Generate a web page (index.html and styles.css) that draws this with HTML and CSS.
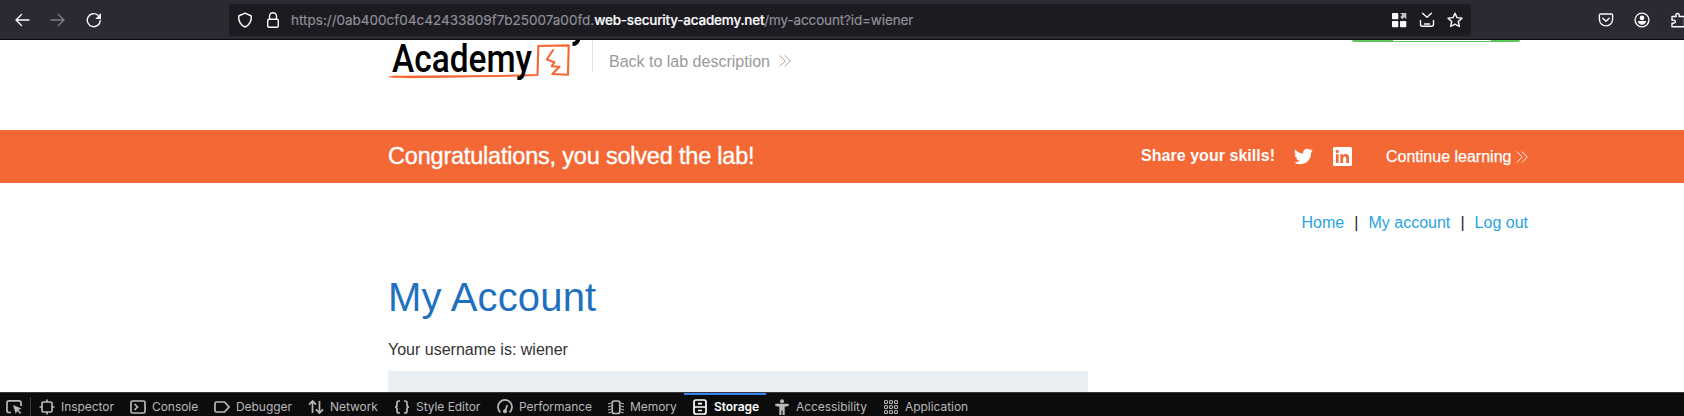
FILE: index.html
```html
<!DOCTYPE html>
<html lang="en">
<head>
<meta charset="utf-8">
<title>My Account</title>
<link rel="stylesheet" href="styles.css">
</head>
<body>
<header class="browser">
  <svg class="ic back" viewBox="0 0 16 16"><path d="M15 8H2M7.500 2.500 2 8l5.500 5.500"/></svg>
  <svg class="ic forward" viewBox="0 0 16 16"><path d="M1 8h13M8.500 2.500 14 8l-5.500 5.500"/></svg>
  <svg class="ic reload" viewBox="0 0 16 16"><path d="M14.300 8.500A6.500 6.500 0 1 1 12 3.200"/><path class="solid" d="M15 1v6H9.300z"/></svg>
  <div class="urlbar">
    <svg class="ic shield" viewBox="0 0 16 16"><path d="M8 1.200 14.300 4c.3 5-1.700 9-6.300 11C3.400 13 1.400 9 1.700 4z"/></svg>
    <svg class="ic lock" viewBox="0 0 16 16"><rect x="2.700" y="7.200" width="10.600" height="8" rx="1.500"/><path d="M4.500 7V4.200a3.500 3.500 0 0 1 7 0V7"/></svg>
    <div class="url"><span class="host-a">https://0ab400cf04c42433809f7b25007a00fd.</span><span class="host-b">web-security-academy.net</span><span class="path">/my-account?id=wiener</span></div>
    <svg class="ic grid" viewBox="0 0 16 16"><g class="solid"><rect x="1" y="1" width="6.300" height="6.300" rx=".8"/><rect x="1" y="9" width="6.300" height="6.300" rx=".8"/><rect x="9" y="9" width="6.300" height="6.300" rx=".8"/><path opacity=".75" d="M9 1h6.300v6.300l-2-2-2 2L9.300 5l2-2z"/></g></svg>
    <svg class="ic tray" viewBox="0 0 16 16"><path d="M3.500 1.300 8 5.300l4.500-4M1.500 8.500v3.800a2 2 0 0 0 2 2h9a2 2 0 0 0 2-2V8.500M5.500 12h5"/></svg>
    <svg class="ic star" viewBox="0 0 16 16"><path d="m8 1.200 2 4.400 5 .6-3.700 3.300 1 5L8 12.100l-4.300 2.400 1-5L1 6.200l5-.6z"/></svg>
  </div>
  <svg class="ic pocket" viewBox="0 0 16 16"><path d="M2.700 2h10.600c.8 0 1.300.5 1.300 1.300v4a6.600 6.600 0 0 1-13.200 0v-4C1.400 2.500 1.900 2 2.700 2zM4.800 6.200 8 9.200l3.200-3"/></svg>
  <svg class="ic person" viewBox="0 0 16 16"><circle cx="8" cy="8" r="6.900"/><circle class="solid" cx="8" cy="5.900" r="2.300"/><path class="solid" d="M3.900 9h8.200c0 2-1.700 3.700-4.100 3.700S3.900 11 3.900 9z"/></svg>
  <svg class="ic puzzle" viewBox="0 0 16 16"><path d="M2 14.700v-3.500c4.500.8 4.500-3.800 0-3V4.500h4.200C4.500.4 10.500.4 9 4.500h5.500v10.200z"/></svg>
</header>

<main class="page">
  <div class="lab-head">
    <div class="logo">
      <svg class="logo-art" viewBox="0 0 204 50"><path class="thin" d="M1 37.800 8 37.400 20 38.600 80 37.600"/><path class="thick" d="M5 37.800 110 37 149.500 36 150.300 7 180.700 6.400 180 35.800 164.300 35 171.500 27.800 163.800 27.200 166.500 23.200 158.800 20.500 165 11"/><path class="tail" d="M184.500 5q4.500 0 6-5"/></svg>
      <span class="logo-text">Academy</span>
    </div>
    <div class="back-link"><span class="back-text">Back to lab description</span><svg class="chev" viewBox="0 0 12 12"><path d="m.7.500 5.500 5.500-5.500 5.500M5.800.500l5.500 5.500-5.500 5.500"/></svg></div>
    <div class="status"><i></i></div>
  </div>
  <section class="banner">
    <span class="congrats">Congratulations, you solved the lab!</span>
    <span class="share">Share your skills!</span>
    <svg class="twitter" viewBox="0 0 24 24"><path d="M23.950 4.570a10 10 0 0 1-2.820.770 4.960 4.960 0 0 0 2.160-2.720c-.95.550-2 .950-3.130 1.180a4.920 4.920 0 0 0-8.380 4.480A13.900 13.900 0 0 1 1.640 3.160a4.820 4.820 0 0 0-.670 2.480c0 1.710.870 3.210 2.190 4.100a4.900 4.900 0 0 1-2.230-.620v.06a4.920 4.920 0 0 0 3.950 4.830 5 5 0 0 1-2.210.080 4.940 4.940 0 0 0 4.600 3.420A9.870 9.870 0 0 1 0 19.540a14 14 0 0 0 7.550 2.210c9.050 0 14-7.500 14-13.980v-.640a9.900 9.900 0 0 0 2.400-2.560z"/></svg>
    <svg class="linkedin" viewBox="0 0 18 18"><path fill-rule="evenodd" d="M1.500 0h15Q18 0 18 1.500v15q0 1.500-1.500 1.500h-15Q0 18 0 16.500v-15Q0 0 1.500 0zM2.800 6.900v8.300h2.500V6.900zM4.050 2.700a1.450 1.450 0 1 0 0 2.900 1.450 1.450 0 0 0 0-2.900zM7 6.900v8.300h2.600v-4.300c0-2.300 2.900-2.500 2.900 0v4.300h2.700V10c0-4-3.900-4.200-5.600-2.100v-1z"/></svg>
    <span class="continue">Continue learning</span>
    <svg class="chev" viewBox="0 0 12 12"><path d="m.7.500 5.500 5.500-5.500 5.500M5.800.500l5.500 5.500-5.500 5.500"/></svg>
  </section>
  <nav class="links"><a class="home">Home</a><b>|</b><a class="account">My account</a><b>|</b><a class="logout">Log out</a></nav>
  <h1>My Account</h1>
  <p class="user">Your username is: wiener</p>
  <div class="form-box"></div>
</main>

<footer class="tools">
  <div class="picker"><svg class="dt" viewBox="0 0 16 16"><path d="M5 13.500H3a2 2 0 0 1-2-2V3.800a2 2 0 0 1 2-2h10a2 2 0 0 1 2 2V7"/><path class="fill" d="m7 6 8.500 3.600-3.200 1.300 3 3-1.200 1.200-3-3-1.300 3z"/></svg></div>
  <div class="tab t1"><svg class="dt" viewBox="0 0 16 16"><rect x="3" y="3" width="10" height="10" rx="1.200"/><path d="M8 .5V3M8 13v2.500M.5 8H3M13 8h2.500"/></svg><span>Inspector</span></div>
  <div class="tab t2"><svg class="dt" viewBox="0 0 16 16"><rect x="1" y="2" width="14" height="12" rx="1.500"/><path d="m4.500 5 3 3-3 3"/></svg><span>Console</span></div>
  <div class="tab t3"><svg class="dt" viewBox="0 0 16 16"><path d="M2.500 3h8l4.500 5-4.500 5h-8Q1 13 1 11.500v-7Q1 3 2.500 3z"/></svg><span>Debugger</span></div>
  <div class="tab t4"><svg class="dt" viewBox="0 0 16 16"><path d="M4.500 14V2M1 5.700 4.500 2 8 5.700M11.500 2v12M8 10.300l3.500 3.700 3.500-3.700"/></svg><span>Network</span></div>
  <div class="tab t5"><svg class="dt" viewBox="0 0 16 16"><path d="M6 2H5Q3 2 3 4v2q0 2-2 2 2 0 2 2v2q0 2 2 2h1M10 2h1q2 0 2 2v2q0 2 2 2-2 0-2 2v2q0 2-2 2h-1"/></svg><span>Style Editor</span></div>
  <div class="tab t6"><svg class="dt" viewBox="0 0 16 16"><path d="M3.500 13.300A7 7 0 1 1 12.500 13.300M8.300 11.500l2-5.500"/><circle class="fill" cx="8" cy="12.300" r="2"/></svg><span>Performance</span></div>
  <div class="tab t7"><svg class="dt" viewBox="0 0 16 16"><rect x="4.200" y="2" width="7.600" height="12.500" rx="2"/><path class="fine" d="m0 5 3-1M0 8l3-1M0 11l3-1M.5 14l2.500-1M16 5l-3-1M16 8l-3-1M16 11l-3-1M15.500 14 13 13"/></svg><span>Memory</span></div>
  <div class="tab t8 active"><svg class="dt" viewBox="0 0 16 16"><rect x="2" y="1" width="12" height="14" rx="2"/><path d="M2 8h12M6 4.700h4M6 11.500h4"/></svg><span>Storage</span></div>
  <div class="tab t9"><svg class="dt" viewBox="0 0 16 16"><circle class="fill" cx="8" cy="2.200" r="2"/><path class="fill" d="M1.300 4.700h13.400v2.200l-4 .8V16H8.600v-4.500H7.400V16H5.300V7.700l-4-.8z"/></svg><span>Accessibility</span></div>
  <div class="tab t10"><svg class="dt" viewBox="0 0 16 16"><g class="fine"><rect x="1.500" y="1.500" width="3" height="3" rx="1"/><rect x="6.500" y="1.500" width="3" height="3" rx="1"/><rect x="11.500" y="1.500" width="3" height="3" rx="1"/><rect x="1.500" y="6.500" width="3" height="3" rx="1"/><rect x="6.500" y="6.500" width="3" height="3" rx="1"/><rect x="11.500" y="6.500" width="3" height="3" rx="1"/><rect x="1.500" y="11.500" width="3" height="3" rx="1"/><rect x="6.500" y="11.500" width="3" height="3" rx="1"/><rect x="11.500" y="11.500" width="3" height="3" rx="1"/></g></svg><span>Application</span></div>
</footer>
</body>
</html>
```
FILE: styles.css
```css
* { box-sizing: border-box; }
body {
  margin: 0;
  width: 1684px;
  height: 416px;
  overflow: hidden;
  background: #fff;
  font-family: "Liberation Sans", Arial, sans-serif;
  display: flex;
  flex-direction: column;
}
svg { display: block; flex: none; }
span, a { white-space: nowrap; }

.browser {
  flex: none;
  height: 40px;
  background: #2b2a33;
  border-bottom: 1px solid #0c0c0d;
  display: flex;
  align-items: center;
  overflow: hidden;
}
.ic {
  width: 16px;
  height: 16px;
  fill: none;
  stroke: #fbfbfe;
  stroke-width: 1.4;
  stroke-linecap: round;
  stroke-linejoin: round;
}
.ic .solid { fill: #fbfbfe; stroke: none; }
.back { margin-left: 14px; }
.forward { margin-left: 20px; opacity: .4; }
.reload { margin-left: 20px; }
.urlbar {
  flex: none;
  width: 1242px;
  height: 32px;
  margin-left: 127px;
  border-radius: 4px;
  background: #1c1b22;
  display: flex;
  align-items: center;
}
.shield { margin-left: 8px; }
.lock { margin-left: 12px; }
.url {
  flex: none;
  width: 1100px;
  margin-left: 10px;
  font: 13.5px/18px Inter, sans-serif;
  color: #8f8f96;
  -webkit-text-stroke: .2px currentColor;
  display: flex;
}
.host-b { color: #fbfbfe; font-weight: 500; letter-spacing: -.2px; }
.path { letter-spacing: -.14px; }
.tray, .star { margin-left: 12px; }
.pocket { margin-left: 127px; }
.person { margin-left: 20px; }
.puzzle { margin-left: 20px; }

.page { flex: none; height: 352px; overflow: hidden; }
.lab-head { height: 90px; display: flex; padding-left: 388px; }
.logo { position: relative; width: 204px; height: 50px; }
.logo-text {
  position: absolute;
  left: 4px;
  top: -3px;
  font: 500 38px/45px Roboto, sans-serif;
  color: #000;
  transform-origin: 0 0;
  transform: scaleX(.88);
}
.logo-art { width: 204px; height: 50px; margin-top: -1px; fill: none; stroke: #f46836; }
.logo-art .thin { stroke-width: 1.2; }
.logo-art .thick { stroke-width: 2.1; stroke-linejoin: round; stroke-linecap: round; }
.logo-art .tail { stroke: #000; stroke-width: 4; }
.back-link {
  height: 32px;
  width: 760px;
  border-left: 1px solid #e2e2e2;
  padding: 12px 0 0 16px;
  display: flex;
  color: #999;
}
.back-text { font-size: 16px; line-height: 20px; }
.chev { width: 12px; height: 12px; fill: none; stroke: currentColor; stroke-width: .9; }
.back-link .chev { margin: 3px 0 0 9px; }
.status { width: 168px; height: 2px; background: #5fc65a; border-radius: 0 0 10px 10px; }
.status i { display: block; width: 98px; height: 1px; margin-left: 41px; background: #fff; }

.banner {
  height: 53px;
  padding-left: 388px;
  background: #f46836;
  color: #fff;
  display: flex;
  align-items: center;
}
.congrats { width: 753px; font-size: 23.500px; letter-spacing: -.2px; -webkit-text-stroke: .35px #fff; }
.share { width: 153px; padding-bottom: 2px; font-size: 16px; font-weight: 700; letter-spacing: .04px; }
.twitter { width: 19px; height: 19px; fill: #fff; }
.linkedin { width: 19px; height: 19px; margin-left: 20px; fill: #fff; }
.continue { margin-left: 34px; width: 130px; font-size: 16px; -webkit-text-stroke: .25px #fff; }

.links { height: 79px; padding: 30px 156px 0 0; display: flex; justify-content: flex-end; font-size: 16px; line-height: 20px; }
.links a { color: #29a4df; }
.links b { font-weight: 400; color: #222; width: 24.3px; text-align: center; }
h1 { margin: 0 0 0 388px; font-size: 40px; line-height: 46px; font-weight: 400; letter-spacing: .16px; height: 62px; padding-top: 12px; color: #1f71bf; }
.user { margin: 16px 0 0 388px; height: 31px; font-size: 16px; line-height: 20px; color: #333; }
.form-box { width: 700px; height: 30px; margin-left: 388px; background: #eaeff3; }

.tools {
  flex: none;
  height: 24px;
  background: #0c0c0d;
  border-top: 1px solid #38383d;
  display: flex;
  font: 12px/16px Inter, sans-serif;
  letter-spacing: -.05px;
  color: #b8b8bb;
}
.picker { width: 31px; padding: 2px 0 0 6px; border-right: 1px solid #38383d; margin-top: 4px; }
.tab { flex: none; padding: 6px 0 0 8px; display: flex; gap: 6px; }
.dt { width: 16px; height: 16px; fill: none; stroke: #b8b8bb; stroke-width: 1.7; }
.dt .fill { fill: #b8b8bb; stroke: none; }
.dt .fine { stroke-width: 1.1; }
.active { color: #fff; font-weight: 600; border-top: 2px solid #3584f4; padding-top: 4px; }
.active .dt { stroke: #fff; }
.t1 { width: 91px; }
.t2 { width: 84px; }
.t3 { width: 94px; }
.t4 { width: 86px; }
.t5 { width: 103px; }
.t6 { width: 111px; }
.t7 { width: 84px; }
.t8 { width: 82px; }
.t9 { width: 109px; }
.t10 { width: 101px; }
```
